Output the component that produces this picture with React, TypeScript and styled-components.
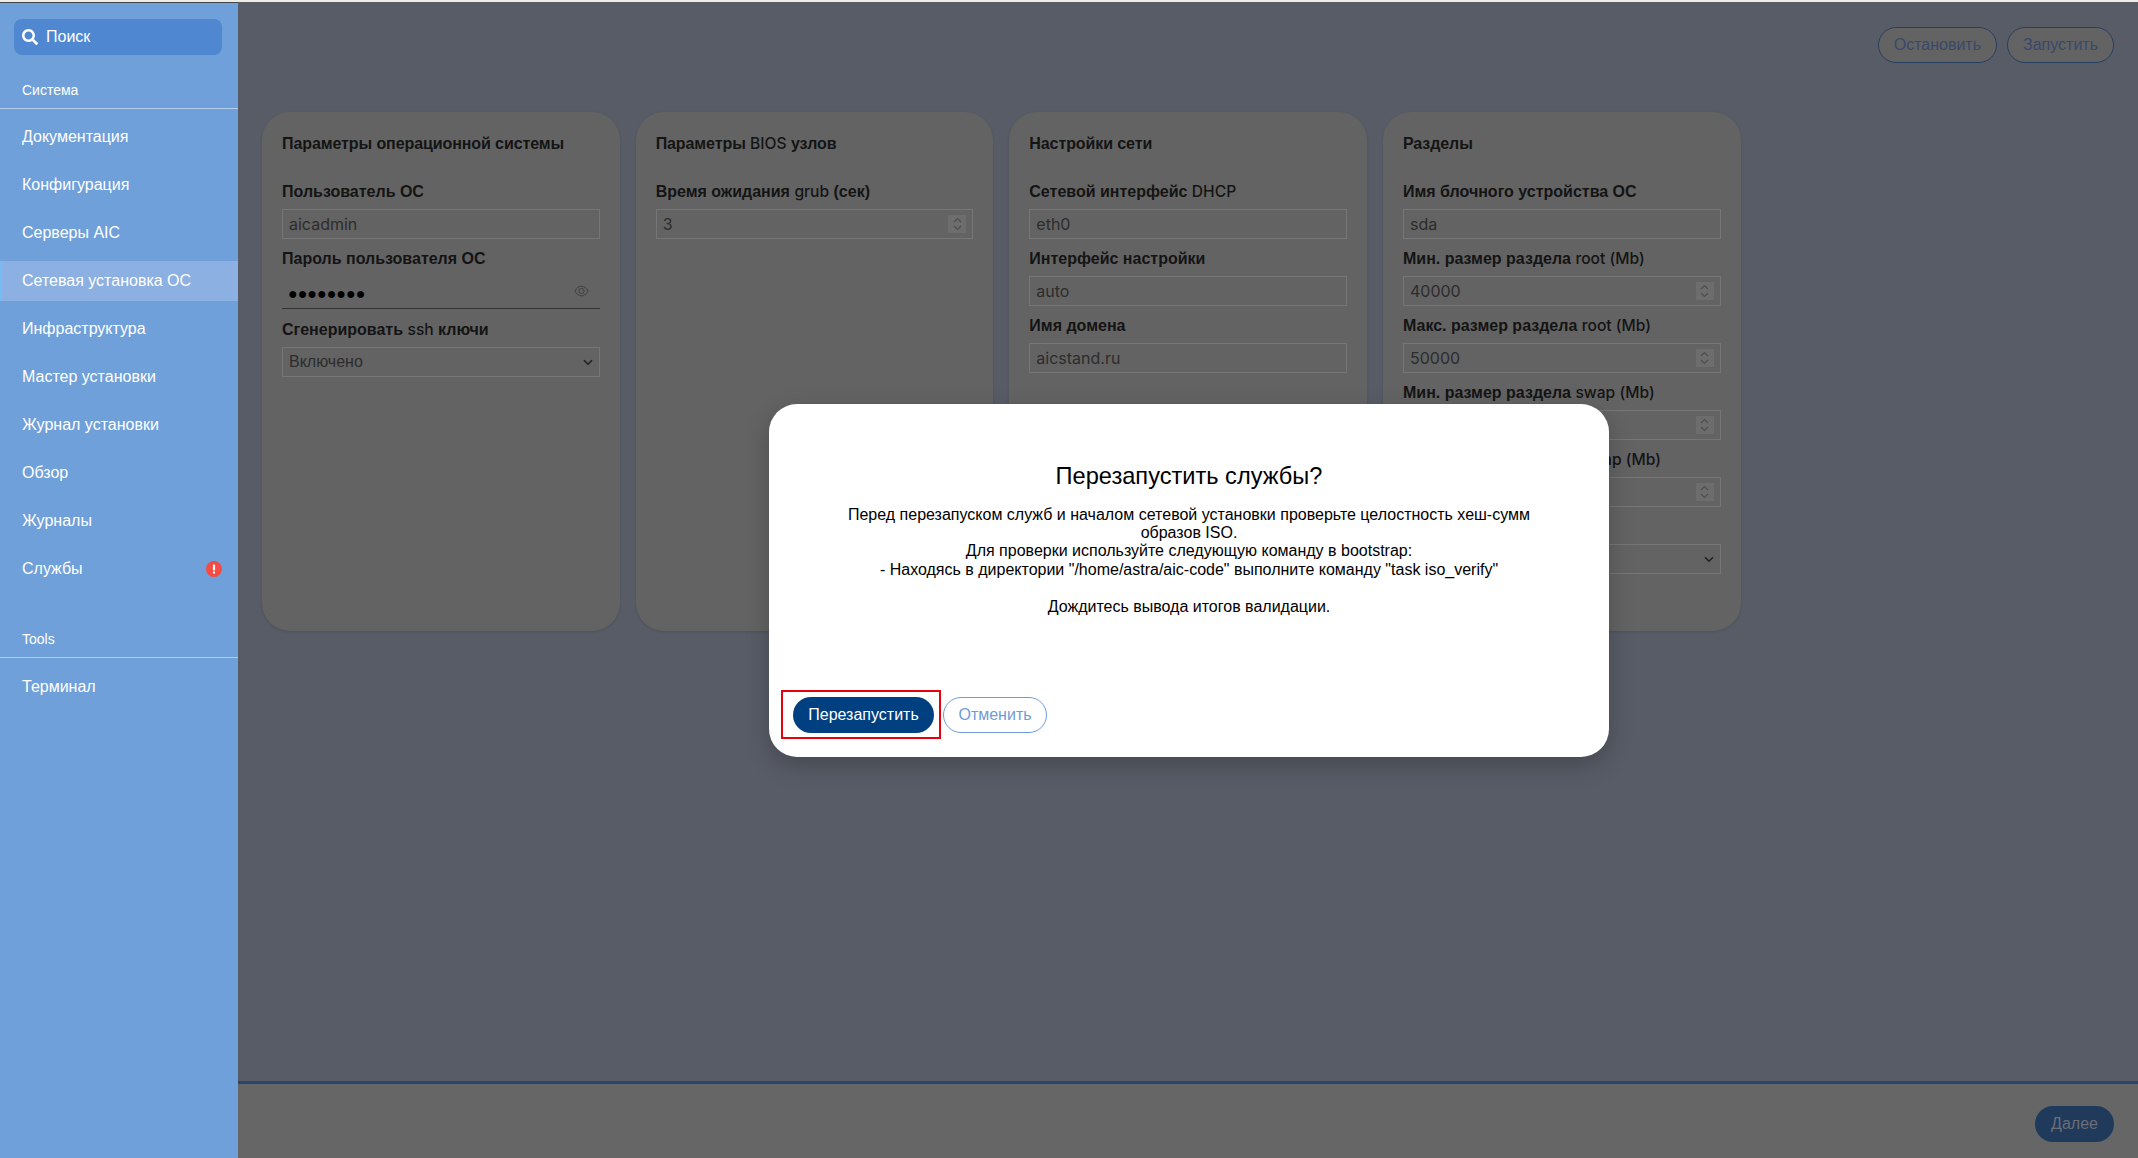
import React from 'react';
import styled, { createGlobalStyle } from 'styled-components';
import { FaSearch } from 'react-icons/fa';

const GlobalStyle = createGlobalStyle`
  html, body {
    margin: 0;
    padding: 0;
    height: 100%;
    background: #585c66;
    font-family: "Liberation Sans", Arial, sans-serif;
  }
  #root {
    height: 100%;
  }
`;

const menuItems = [
  { label: 'Документация' },
  { label: 'Конфигурация' },
  { label: 'Серверы AIC' },
  { label: 'Сетевая установка ОС', active: true },
  { label: 'Инфраструктура' },
  { label: 'Мастер установки' },
  { label: 'Журнал установки' },
  { label: 'Обзор' },
  { label: 'Журналы' },
  { label: 'Службы', alert: true },
];

const EyeIcon = () => (
  <svg width="15" height="12" viewBox="0 0 15 12" fill="none" stroke="#3f3f3f" strokeWidth="1">
    <path d="M0.8 6C2.6 2.6 5 1.2 7.5 1.2S12.4 2.6 14.2 6C12.4 9.4 10 10.8 7.5 10.8S2.6 9.4 0.8 6Z" />
    <circle cx="7.5" cy="6" r="2.6" />
  </svg>
);

const ChevronDown = () => (
  <svg width="10" height="7" viewBox="0 0 10 7" fill="none" stroke="#222" strokeWidth="1.6">
    <path d="M1 1.2L5 5.2L9 1.2" />
  </svg>
);

const SpinIcon = () => (
  <svg width="9" height="14" viewBox="0 0 9 14" fill="none" stroke="#4d4d4d" strokeWidth="1.1">
    <path d="M1 5L4.5 1.6L8 5" />
    <path d="M1 9L4.5 12.4L8 9" />
  </svg>
);

const AlertIcon = () => (
  <svg width="16" height="16" viewBox="0 0 16 16">
    <circle cx="8" cy="8" r="8" fill="#f44b42" />
    <rect x="6.9" y="3.4" width="2.2" height="6" rx="0.6" fill="#fff" />
    <rect x="6.9" y="10.4" width="2.2" height="2.2" rx="0.6" fill="#fff" />
  </svg>
);

export default function App() {
  return (
    <>
      <GlobalStyle />
      <Page>
        <TopStrip />
        <Shell>
          <Sidebar>
            <SearchBox>
              <FaSearch size={16} color="#fff" />
              <span>Поиск</span>
            </SearchBox>
            <SectionTitle $first>Система</SectionTitle>
            <MenuList>
              {menuItems.map(({ label, active, alert }) => (
                <MenuItem key={label} $active={active}>
                  {label}
                  {alert && <AlertIcon />}
                </MenuItem>
              ))}
            </MenuList>
            <SectionTitle>Tools</SectionTitle>
            <MenuList>
              <MenuItem>Терминал</MenuItem>
            </MenuList>
          </Sidebar>

          <Main>
            <Toolbar>
              <OutlineButton>Остановить</OutlineButton>
              <OutlineButton>Запустить</OutlineButton>
            </Toolbar>

            <Cards>
              <Card>
                <CardTitle>Параметры операционной системы</CardTitle>
                <Fields>
                  <FieldLabel>Пользователь ОС</FieldLabel>
                  <TextInput>aicadmin</TextInput>
                  <FieldLabel>Пароль пользователя ОС</FieldLabel>
                  <PasswordInput>
                    <Dots>●●●●●●●●</Dots>
                    <EyeIcon />
                  </PasswordInput>
                  <FieldLabel $tight>Сгенерировать <Latin>ssh</Latin> ключи</FieldLabel>
                  <SelectInput>
                    Включено
                    <ChevronDown />
                  </SelectInput>
                </Fields>
              </Card>

              <Card>
                <CardTitle>Параметры <Latin>BIOS</Latin> узлов</CardTitle>
                <Fields>
                  <FieldLabel>Время ожидания <Latin>grub</Latin> (сек)</FieldLabel>
                  <NumberInput value="3" />
                </Fields>
              </Card>

              <Card>
                <CardTitle>Настройки сети</CardTitle>
                <Fields>
                  <FieldLabel>Сетевой интерфейс <Latin>DHCP</Latin></FieldLabel>
                  <TextInput>eth0</TextInput>
                  <FieldLabel>Интерфейс настройки</FieldLabel>
                  <TextInput>auto</TextInput>
                  <FieldLabel>Имя домена</FieldLabel>
                  <TextInput>aicstand.ru</TextInput>
                </Fields>
              </Card>

              <Card>
                <CardTitle>Разделы</CardTitle>
                <Fields>
                  <FieldLabel>Имя блочного устройства ОС</FieldLabel>
                  <TextInput>sda</TextInput>
                  <FieldLabel>Мин. размер раздела <Latin>root (Mb)</Latin></FieldLabel>
                  <NumberInput value="40000" />
                  <FieldLabel>Макс. размер раздела <Latin>root (Mb)</Latin></FieldLabel>
                  <NumberInput value="50000" />
                  <FieldLabel>Мин. размер раздела <Latin>swap (Mb)</Latin></FieldLabel>
                  <NumberInput value="" />
                  <FieldLabel>Макс. размер раздела <Latin>swap (Mb)</Latin></FieldLabel>
                  <NumberInput value="" />
                  <FieldLabel>&nbsp;</FieldLabel>
                  <SelectInput>
                    &nbsp;
                    <ChevronDown />
                  </SelectInput>
                </Fields>
              </Card>
            </Cards>

            <Footer>
              <SolidButton>Далее</SolidButton>
            </Footer>

            <Backdrop>
              <Modal>
                <ModalTitle>Перезапустить службы?</ModalTitle>
                <ModalBody>
                  Перед перезапуском служб и началом сетевой установки проверьте целостность хеш-сумм образов ISO.
                  <br />
                  Для проверки используйте следующую команду в bootstrap:
                  <br />
                  - Находясь в директории "/home/astra/aic-code" выполните команду "task iso_verify"
                  <br />
                  <br />
                  Дождитесь вывода итогов валидации.
                </ModalBody>
                <ModalActions>
                  <PrimaryButton>
                    Перезапустить
                    <Highlight />
                  </PrimaryButton>
                  <CancelButton>Отменить</CancelButton>
                </ModalActions>
              </Modal>
            </Backdrop>
          </Main>
        </Shell>
      </Page>
    </>
  );
}

function NumberInput({ value }: { value: string }) {
  return (
    <TextInput>
      {value || '\u00a0'}
      <SpinBox>
        <SpinIcon />
      </SpinBox>
    </TextInput>
  );
}

const Page = styled.div`
  display: flex;
  flex-direction: column;
  height: 1158px;
  overflow: hidden;
`;

const TopStrip = styled.div`
  height: 2px;
  background: #f0ebe4;
`;

const Shell = styled.div`
  display: flex;
  flex: 1;
  min-height: 0;
`;

const Sidebar = styled.nav`
  display: flex;
  flex-direction: column;
  width: 238px;
  flex-shrink: 0;
  box-sizing: border-box;
  padding-top: 16px;
  background: #70a0da;
  border-top: 1px solid #40444e;
  color: #fff;
`;

const SearchBox = styled.div`
  display: flex;
  align-items: center;
  gap: 8px;
  height: 36px;
  margin: 0 16px 0 14px;
  padding-left: 8px;
  border-radius: 8px;
  background: #4f87d0;
  font-size: 16px;
`;

const SectionTitle = styled.div<{ $first?: boolean }>`
  margin: ${(p) => (p.$first ? '27px 0 0' : '42px 0 1px')};
  padding: 0 22px 10px;
  line-height: 16px;
  font-size: 14px;
  border-bottom: 1px solid #b4cdec;
`;

const MenuList = styled.div`
  display: flex;
  flex-direction: column;
  gap: 8px;
  margin-top: 8px;
`;

const MenuItem = styled.div<{ $active?: boolean }>`
  display: flex;
  align-items: center;
  justify-content: space-between;
  height: 40px;
  box-sizing: border-box;
  padding: 0 16px 0 22px;
  font-size: 16px;
  background: ${(p) => (p.$active ? '#8cb0e2' : 'transparent')};
  box-shadow: ${(p) => (p.$active ? 'inset 2px 0 0 #73bcf7' : 'none')};
`;

const Main = styled.main`
  position: relative;
  display: flex;
  flex-direction: column;
  flex: 1;
  min-width: 0;
  background: #585c66;
`;

const Toolbar = styled.div`
  display: flex;
  justify-content: flex-end;
  gap: 10px;
  padding: 25px 24px 0;
`;

const OutlineButton = styled.button`
  height: 36px;
  padding: 0 15px;
  border: 1px solid #263e60;
  border-radius: 18px;
  background: #636363;
  color: #38496a;
  font: 16px "Liberation Sans", Arial, sans-serif;
`;

const Cards = styled.div`
  display: flex;
  align-items: flex-start;
  gap: 16px;
  flex: 1;
  margin-top: 49px;
  padding-left: 24px;
`;

const Card = styled.section`
  width: 357.67px;
  height: 519px;
  box-sizing: border-box;
  padding: 20px;
  border-radius: 28px;
  background: #636363;
  box-shadow: 0 1px 3px rgba(0, 0, 0, 0.12);
`;

const CardTitle = styled.h2`
  height: 24px;
  margin: 0 0 16px;
  line-height: 24px;
  font-size: 16px;
  font-weight: 700;
  letter-spacing: -0.09px;
  color: #141414;
`;

const Fields = styled.div`
  display: flex;
  flex-direction: column;
`;

const FieldLabel = styled.label<{ $tight?: boolean }>`
  display: block;
  height: 20px;
  margin: ${(p) => (p.$tight ? '11px 0 7px' : '10px 0 7px')};
  line-height: 20px;
  font-size: 16px;
  font-weight: 700;
  color: #141414;
`;

const Latin = styled.span`
  font-family: Inter, sans-serif;
  font-weight: 500;
  font-size: 15.6px;
  letter-spacing: 0;
`;

const TextInput = styled.div`
  display: flex;
  align-items: center;
  justify-content: space-between;
  height: 30px;
  box-sizing: border-box;
  padding: 0 6px;
  border: 1px solid #767676;
  font-family: Inter, sans-serif;
  font-size: 16px;
  color: #2c2c2c;
`;

const SelectInput = styled(TextInput)`
  font-family: "Liberation Sans", Arial, sans-serif;
`;

const PasswordInput = styled.div`
  display: flex;
  justify-content: space-between;
  height: 33px;
  box-sizing: border-box;
  padding: 0 11px 0 6px;
  border-bottom: 1px solid #333;

  svg {
    margin-top: 9px;
  }
`;

const Dots = styled.span`
  line-height: 36px;
  font-size: 16px;
  color: #000;
`;

const SpinBox = styled.span`
  display: flex;
  align-items: center;
  justify-content: center;
  width: 18px;
  height: 18px;
  background: #6d6d6d;
`;

const Footer = styled.footer`
  display: flex;
  justify-content: flex-end;
  box-sizing: border-box;
  height: 77px;
  padding: 22px 24px 0;
  background: #666;
  border-top: 3px solid #2a4470;
`;

const SolidButton = styled.button`
  width: 79px;
  height: 36px;
  border: 0;
  border-radius: 18px;
  background: #203a5c;
  color: #6b6f75;
  font: 16px "Liberation Sans", Arial, sans-serif;
`;

/* dim layer of the modal, the colours under it are already darkened */
const Backdrop = styled.div`
  position: absolute;
  inset: 0;
  display: flex;
  align-items: center;
  justify-content: center;
  padding-left: 2px;
`;

const Modal = styled.div`
  display: flex;
  flex-direction: column;
  width: 840px;
  height: 353px;
  box-sizing: border-box;
  padding: 58px 24px 24px;
  border-radius: 28px;
  background: #fff;
  color: #000;
  box-shadow: 0 8px 24px rgba(0, 0, 0, 0.22);
`;

const ModalTitle = styled.h1`
  margin: 0 0 16px;
  text-align: center;
  line-height: 28px;
  font-size: 23.6px;
  font-weight: 400;
`;

const ModalBody = styled.div`
  padding: 0 24px;
  text-align: center;
  font-size: 16px;
  line-height: 18.4px;
`;

const ModalActions = styled.div`
  display: flex;
  gap: 9px;
  margin-top: auto;
`;

const PrimaryButton = styled.button`
  position: relative;
  width: 141px;
  height: 36px;
  border: 0;
  border-radius: 18px;
  background: #004080;
  color: #fff;
  font: 16px "Liberation Sans", Arial, sans-serif;
`;

const Highlight = styled.span`
  position: absolute;
  top: -7px;
  bottom: -6px;
  left: -12px;
  right: -7px;
  border: 2px solid #e8000b;
`;

const CancelButton = styled.button`
  width: 104px;
  height: 36px;
  border: 1px solid #6f9bd8;
  border-radius: 18px;
  background: #fff;
  color: #6f9bd8;
  font: 16px "Liberation Sans", Arial, sans-serif;
`;
